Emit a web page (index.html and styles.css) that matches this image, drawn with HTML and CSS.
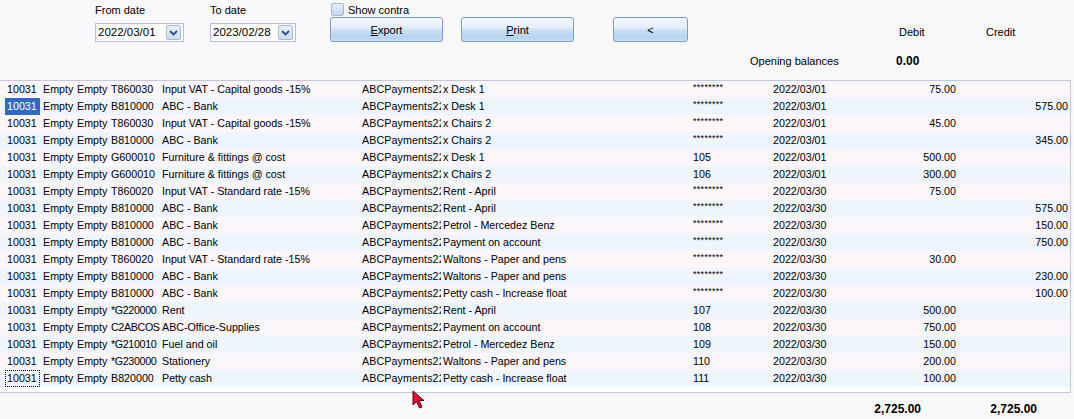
FILE: index.html
```html
<!DOCTYPE html>
<html>
<head>
<meta charset="utf-8">
<title>Ledger transactions</title>
<link rel="stylesheet" href="styles.css">
</head>
<body>
<div class="page">
  <div class="header">
    <div class="field from">
      <div class="label">From date</div>
      <div class="datebox"><span class="dateval">2022/03/01</span><span class="drop"><svg width="9" height="6" viewBox="0 0 9 6"><path d="M1 1 L4.5 4.5 L8 1" fill="none" stroke="#24508f" stroke-width="1.8"/></svg></span></div>
    </div>
    <div class="field to">
      <div class="label">To date</div>
      <div class="datebox"><span class="dateval">2023/02/28</span><span class="drop"><svg width="9" height="6" viewBox="0 0 9 6"><path d="M1 1 L4.5 4.5 L8 1" fill="none" stroke="#24508f" stroke-width="1.8"/></svg></span></div>
    </div>
    <div class="field exportgrp">
      <div class="check"><span class="box"></span><span>Show contra</span></div>
      <div class="btn wide"><span class="ul">E</span>xport</div>
    </div>
    <div class="btn wide print"><span class="ul">P</span>rint</div>
    <div class="btn back">&lt;</div>
    <div class="balances">
      <div class="colheads"><span class="dh">Debit</span><span>Credit</span></div>
      <div class="opening"><span class="ol">Opening balances</span><span class="bold">0.00</span></div>
    </div>
  </div>

  <div class="grid">
    <div class="row odd"><span>10031</span><span>Empty</span><span>Empty</span><span>T860030</span><span>Input VAT - Capital goods -15%</span><span class="clip">ABCPayments22</span><span>x Desk 1</span><span class="stars">********</span><span>2022/03/01</span><span class="num">75.00</span><span class="num"></span></div>
    <div class="row even"><span class="sel">10031</span><span>Empty</span><span>Empty</span><span>B810000</span><span>ABC - Bank</span><span class="clip">ABCPayments22</span><span>x Desk 1</span><span class="stars">********</span><span>2022/03/01</span><span class="num"></span><span class="num">575.00</span></div>
    <div class="row odd"><span>10031</span><span>Empty</span><span>Empty</span><span>T860030</span><span>Input VAT - Capital goods -15%</span><span class="clip">ABCPayments22</span><span>x Chairs 2</span><span class="stars">********</span><span>2022/03/01</span><span class="num">45.00</span><span class="num"></span></div>
    <div class="row even"><span>10031</span><span>Empty</span><span>Empty</span><span>B810000</span><span>ABC - Bank</span><span class="clip">ABCPayments22</span><span>x Chairs 2</span><span class="stars">********</span><span>2022/03/01</span><span class="num"></span><span class="num">345.00</span></div>
    <div class="row odd"><span>10031</span><span>Empty</span><span>Empty</span><span>G600010</span><span>Furniture &amp; fittings @ cost</span><span class="clip">ABCPayments22</span><span>x Desk 1</span><span>105</span><span>2022/03/01</span><span class="num">500.00</span><span class="num"></span></div>
    <div class="row even"><span>10031</span><span>Empty</span><span>Empty</span><span>G600010</span><span>Furniture &amp; fittings @ cost</span><span class="clip">ABCPayments22</span><span>x Chairs 2</span><span>106</span><span>2022/03/01</span><span class="num">300.00</span><span class="num"></span></div>
    <div class="row odd"><span>10031</span><span>Empty</span><span>Empty</span><span>T860020</span><span>Input VAT - Standard rate -15%</span><span class="clip">ABCPayments22</span><span>Rent - April</span><span class="stars">********</span><span>2022/03/30</span><span class="num">75.00</span><span class="num"></span></div>
    <div class="row even"><span>10031</span><span>Empty</span><span>Empty</span><span>B810000</span><span>ABC - Bank</span><span class="clip">ABCPayments22</span><span>Rent - April</span><span class="stars">********</span><span>2022/03/30</span><span class="num"></span><span class="num">575.00</span></div>
    <div class="row odd"><span>10031</span><span>Empty</span><span>Empty</span><span>B810000</span><span>ABC - Bank</span><span class="clip">ABCPayments22</span><span>Petrol - Mercedez Benz</span><span class="stars">********</span><span>2022/03/30</span><span class="num"></span><span class="num">150.00</span></div>
    <div class="row even"><span>10031</span><span>Empty</span><span>Empty</span><span>B810000</span><span>ABC - Bank</span><span class="clip">ABCPayments22</span><span>Payment on account</span><span class="stars">********</span><span>2022/03/30</span><span class="num"></span><span class="num">750.00</span></div>
    <div class="row odd"><span>10031</span><span>Empty</span><span>Empty</span><span>T860020</span><span>Input VAT - Standard rate -15%</span><span class="clip">ABCPayments22</span><span>Waltons - Paper and pens</span><span class="stars">********</span><span>2022/03/30</span><span class="num">30.00</span><span class="num"></span></div>
    <div class="row even"><span>10031</span><span>Empty</span><span>Empty</span><span>B810000</span><span>ABC - Bank</span><span class="clip">ABCPayments22</span><span>Waltons - Paper and pens</span><span class="stars">********</span><span>2022/03/30</span><span class="num"></span><span class="num">230.00</span></div>
    <div class="row odd"><span>10031</span><span>Empty</span><span>Empty</span><span>B810000</span><span>ABC - Bank</span><span class="clip">ABCPayments22</span><span>Petty cash - Increase float</span><span class="stars">********</span><span>2022/03/30</span><span class="num"></span><span class="num">100.00</span></div>
    <div class="row even"><span>10031</span><span>Empty</span><span>Empty</span><span class="tight">*G220000</span><span>Rent</span><span class="clip">ABCPayments22</span><span>Rent - April</span><span>107</span><span>2022/03/30</span><span class="num">500.00</span><span class="num"></span></div>
    <div class="row odd"><span>10031</span><span>Empty</span><span>Empty</span><span class="tight">C2ABCOS</span><span>ABC-Office-Supplies</span><span class="clip">ABCPayments22</span><span>Payment on account</span><span>108</span><span>2022/03/30</span><span class="num">750.00</span><span class="num"></span></div>
    <div class="row even"><span>10031</span><span>Empty</span><span>Empty</span><span class="tight">*G210010</span><span>Fuel and oil</span><span class="clip">ABCPayments22</span><span>Petrol - Mercedez Benz</span><span>109</span><span>2022/03/30</span><span class="num">150.00</span><span class="num"></span></div>
    <div class="row odd"><span>10031</span><span>Empty</span><span>Empty</span><span class="tight">*G230000</span><span>Stationery</span><span class="clip">ABCPayments22</span><span>Waltons - Paper and pens</span><span>110</span><span>2022/03/30</span><span class="num">200.00</span><span class="num"></span></div>
    <div class="row even"><span class="focus">10031</span><span>Empty</span><span>Empty</span><span>B820000</span><span>Petty cash</span><span class="clip">ABCPayments22</span><span>Petty cash - Increase float</span><span>111</span><span>2022/03/30</span><span class="num">100.00</span><span class="num"></span></div>
  </div>

  <div class="totals"><span class="bold">2,725.00</span><span class="bold">2,725.00</span></div>

  <svg class="cursor" width="14" height="19" viewBox="0 0 14 19"><path d="M1 1 L1 15 L4.5 11.5 L7.5 18 L10 17 L7 10.5 L12 10.5 Z" fill="#e8102c" stroke="#5a0010" stroke-width="1"/></svg>
</div>
</body>
</html>
```

FILE: styles.css
```css
* { box-sizing: border-box; }
html, body { margin: 0; padding: 0; }
body {
  background: #f8f8fb;
  font-family: "Liberation Sans", Arial, sans-serif;
  font-size: 10.7px;
  color: #000;
}
.page { position: relative; width: 1074px; height: 419px; overflow: hidden; }

.header { display: flex; align-items: flex-start; height: 80px; }
.field { display: flex; flex-direction: column; }
.label { padding-top: 3px; line-height: 14px; height: 17px; font-size: 11px; }
.from { margin-left: 95px; width: 89px; }
.to { margin-left: 26px; width: 86px; }
.datebox {
  margin-top: 6px;
  height: 19px;
  border: 1px solid #b7bed6;
  background: #fff;
  display: flex;
  align-items: center;
  justify-content: space-between;
  padding: 0 2px 0 2px;
}
.dateval { line-height: 15px; font-size: 11.5px; }
.drop {
  width: 15px; height: 15px;
  border: 1px solid #9fbbe0;
  border-radius: 2px;
  background: linear-gradient(#eaf2fc, #c9dcf3);
  display: flex; align-items: center; justify-content: center;
}
.exportgrp { margin-left: 34px; width: 113px; }
.check { display: flex; align-items: center; height: 17px; padding-top: 2px; font-size: 11px; }
.check .box {
  width: 13px; height: 13px;
  margin-left: 1px; margin-right: 4px;
  border: 1px solid #9db8dd;
  border-radius: 2px;
  background: linear-gradient(#e6effa, #c3d8f1);
}
.btn {
  height: 25px;
  border: 1px solid #7b9dcb;
  border-radius: 3px;
  background: linear-gradient(#f5f9fd 0%, #e4eefa 40%, #c9def4 55%, #b7d3f0 88%, #cde1f6 100%);
  display: flex; align-items: center; justify-content: center;
  line-height: 14px;
  font-size: 11px;
}
.btn.wide { width: 113px; }
.print { margin-left: 18px; margin-top: 17px; }
.back { margin-left: 39px; margin-top: 17px; width: 75px; }
.ul { text-decoration: underline; }

.balances { margin-left: 62px; width: 320px; font-size: 11px; }
.colheads { display: flex; margin-top: 25px; line-height: 14px; padding-left: 149px; }
.colheads .dh { width: 87px; }
.opening { display: flex; margin-top: 15px; line-height: 14px; }
.opening .ol { width: 146px; }
.bold { font-weight: bold; font-size: 12px; }

.grid {
  width: 1071px;
  border-top: 1px solid #c3c7df;
  border-right: 1px solid #c3c7df;
  border-bottom: 1px solid #c3c7df;
  background: #fff;
  padding-bottom: 5px;
}
.row {
  display: grid;
  grid-template-columns: 36px 34px 34px 51px 200px 81px 250px 80px 80px 107px 1fr;
  padding-left: 5px;
  height: 17px;
  line-height: 17px;
}
.row.odd { background: #faf6f9; }
.row.even { background: #eef5fc; }
.row span { padding-left: 2px; white-space: nowrap; overflow: hidden; }
.row .tight { letter-spacing: -0.35px; }
.row .clip { text-overflow: clip; letter-spacing: 0.1px; }
.row .num { text-align: right; padding-left: 0; padding-right: 2px; }
.row .sel { background: #316ac5; color: #fff; width: 35px; }
.row .focus { outline: 1px dotted #000; outline-offset: -1px; width: 35px; }
.row .stars { font-size: 9px; line-height: 13px; letter-spacing: 0.3px; }

.totals {
  display: grid;
  grid-template-columns: 71px 116px;
  padding-left: 850px;
  margin-top: 9px;
  line-height: 14px;
}
.totals span { text-align: right; }

.cursor { position: absolute; left: 412px; top: 390px; }
```
